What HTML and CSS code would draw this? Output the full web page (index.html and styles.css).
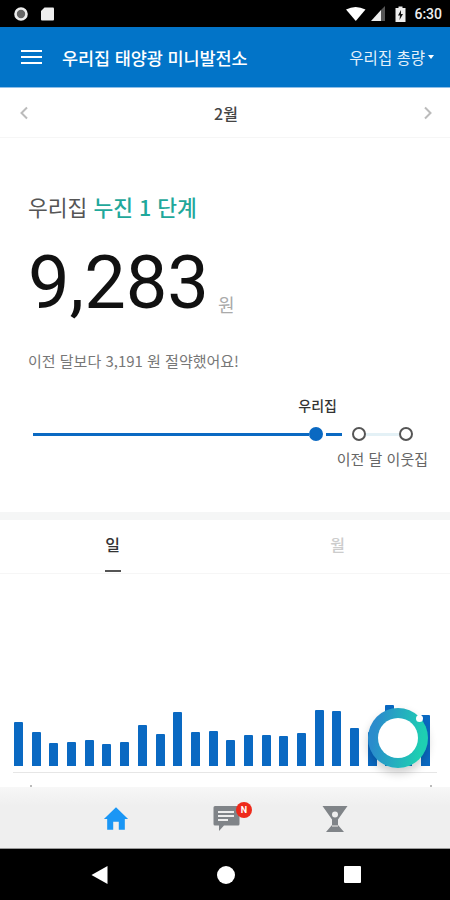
FILE: index.html
```html
<!DOCTYPE html>
<html lang="ko">
<head>
  <meta charset="UTF-8" />
  <meta name="viewport" content="width=device-width, initial-scale=1.0"/>
  <title>우리집 태양광 미니발전소</title>
  <link rel="stylesheet" href="styles.css">
</head>
<body>

  <div class="phone">

    <div class="status-bar">
      <div class="status-left">
        <svg width="16" height="16" viewBox="0 0 16 16"><circle cx="8" cy="8" r="5.5" fill="#666" stroke="#eee" stroke-width="2.6"/></svg>
        <svg width="15" height="16" viewBox="0 0 15 16"><path d="M4.5 1.5H13a1 1 0 0 1 1 1V13.5a1 1 0 0 1-1 1H2a1 1 0 0 1-1-1V5z" fill="#eee"/></svg>
      </div>
      <div class="status-right">
        <svg width="22" height="16" viewBox="0 0 22 16"><path d="M1 3.5Q10.500 -1.500 20.500 3.500L10.800 15z" fill="#fff"/></svg>
        <svg width="16" height="16" viewBox="0 0 16 16"><path d="M1 15L11 4V15z" fill="#eee"/><path d="M11 4L15 0V15H11z" fill="#555"/></svg>
        <svg class="battery" width="11" height="18" viewBox="0 0 11 18"><path d="M3.500 1.500H7.500V3H10.500V17H.5V3H3.500z" fill="#eee"/><path d="M6 5L3 10.500H5L4.500 15L8 9H6z" fill="#111"/></svg>
        <span class="clock">6:30</span>
      </div>
    </div>

    <header class="app-bar">
      <div class="menu-icon"><span></span><span></span><span></span></div>
      <div class="app-title">우리집 태양광 미니발전소</div>
      <div class="app-filter">우리집 총량 <i class="caret"></i></div>
    </header>

    <div class="month-bar">
      <svg width="10" height="14" viewBox="0 0 10 14"><path d="M8 1.500L2.500 7L8 12.500" fill="none" stroke="#bbb" stroke-width="2"/></svg>
      <div class="month-label">2월</div>
      <svg width="10" height="14" viewBox="0 0 10 14"><path d="M2 1.500L7.500 7L2 12.500" fill="none" stroke="#bbb" stroke-width="2"/></svg>
    </div>

    <section class="summary">
      <h2 class="level">우리집 <span class="level-name">누진 1 단계</span></h2>
      <div class="amount"><span class="amount-num">9,283</span><span class="amount-unit">원</span></div>
      <p class="saving">이전 달보다 3,191 원 절약했어요!</p>

      <div class="compare">
        <div class="compare-top">우리집</div>
        <div class="compare-track">
          <span class="line line-long"></span>
          <span class="dot dot-on"></span>
          <span class="line line-short"></span>
          <span class="dot"></span>
          <span class="line line-pale"></span>
          <span class="dot"></span>
        </div>
        <div class="compare-bottom">이전 달 이웃집</div>
      </div>
    </section>

    <nav class="tabs">
      <div class="tab tab-on">일</div>
      <div class="tab">월</div>
    </nav>

    <section class="chart">
      <div class="bars">
        <span style="height:44px"></span>
        <span style="height:34px"></span>
        <span style="height:23px"></span>
        <span style="height:24px"></span>
        <span style="height:26px"></span>
        <span style="height:22px"></span>
        <span style="height:24px"></span>
        <span style="height:41px"></span>
        <span style="height:32px"></span>
        <span style="height:54px"></span>
        <span style="height:34px"></span>
        <span style="height:35px"></span>
        <span style="height:26px"></span>
        <span style="height:31px"></span>
        <span style="height:31px"></span>
        <span style="height:30px"></span>
        <span style="height:33px"></span>
        <span style="height:56px"></span>
        <span style="height:55px"></span>
        <span style="height:38px"></span>
        <span style="height:34px"></span>
        <span style="height:61px"></span>
        <span style="height:40px"></span>
        <span style="height:51px"></span>
      </div>
      <div class="axis"></div>
      <div class="ticks"><i></i><i></i></div>
      <div class="fab"><span class="fab-dot"></span></div>
    </section>

    <nav class="bottom-nav">
      <svg width="26" height="25" viewBox="0 0 28 26"><path d="M14 1L27 13.500H23.500V25H17V16.500H11V25H4.500V13.500H1z" fill="#1a96f5"/></svg>
      <div class="msg-icon">
        <svg width="28" height="27" viewBox="0 0 28 27">
          <path d="M2 1H25a1.500 1.500 0 0 1 1.500 1.500V19a1.500 1.500 0 0 1-1.500 1.500H11L6 26V20.500H2A1.500 1.500 0 0 1 .5 19V2.500A1.500 1.500 0 0 1 2 1z" fill="#808488"/>
          <path d="M5 7H21M5 11H21M5 15H15" stroke="#eee" stroke-width="1.800"/>
        </svg>
        <span class="badge">N</span>
      </div>
      <svg width="26" height="28" viewBox="0 0 26 28">
        <path d="M.5 1H25.500L16 14.500V20L22 27H4L10 20V14.500z" fill="#808488"/>
        <path d="M10 21H16" stroke="#ccc" stroke-width="1.500"/>
        <circle cx="13" cy="9.500" r="3" fill="#eee"/>
      </svg>
    </nav>

    <div class="sys-nav">
      <svg width="17" height="18" viewBox="0 0 17 18"><path d="M16.500 0V18L.5 9z" fill="#fff"/></svg>
      <svg width="18" height="18" viewBox="0 0 18 18"><circle cx="9" cy="9" r="9" fill="#fff"/></svg>
      <svg width="17" height="17" viewBox="0 0 17 17"><rect width="17" height="17" rx="1" fill="#fff"/></svg>
    </div>

  </div>

</body>
</html>
```

FILE: styles.css
```css
body {
  margin: 0;
  font-family: "Noto Sans CJK KR", Roboto, sans-serif;
  background-color: #fff;
}

.phone {
  width: 450px;
  height: 900px;
  display: flex;
  flex-direction: column;
  overflow: hidden;
}

.status-bar {
  height: 27px;
  flex: none;
  background-color: #000;
  display: flex;
  justify-content: space-between;
  align-items: center;
  padding: 0 8px 0 13px;
}

.status-left,
.status-right {
  display: flex;
  align-items: center;
}

.status-left {
  gap: 11px;
}

.status-right {
  gap: 3px;
}

.battery {
  margin: 0 5px 0 6px;
}

.clock {
  font-family: Roboto, sans-serif;
  font-size: 14px;
  font-weight: 500;
  color: #eee;
}

.app-bar {
  height: 61px;
  flex: none;
  box-sizing: border-box;
  background-color: #0274c8;
  border-bottom: 1px solid #8fbfe8;
  display: flex;
  align-items: center;
  padding: 0 16px 0 21px;
  color: #fff;
}

.menu-icon {
  width: 21px;
  display: flex;
  flex-direction: column;
  gap: 4px;
  margin-right: 20px;
}

.menu-icon span {
  height: 2px;
  background-color: #fff;
}

.app-title {
  font-size: 17.500px;
  font-weight: 500;
  letter-spacing: -0.1px;
}

.app-filter {
  margin-left: auto;
  font-size: 15.500px;
  color: #e4f0fa;
  display: flex;
  align-items: center;
  gap: 3px;
}

.caret {
  width: 0;
  height: 0;
  border-left: 3.5px solid transparent;
  border-right: 3.5px solid transparent;
  border-top: 4px solid #fff;
}

.month-bar {
  height: 50px;
  flex: none;
  box-sizing: border-box;
  border-bottom: 1px solid #f6f6f6;
  display: flex;
  justify-content: space-between;
  align-items: center;
  padding: 0 17px 0 19px;
}

.month-label {
  font-size: 16px;
  font-weight: 500;
  color: #444;
}

.summary {
  height: 382px;
  flex: none;
  box-sizing: border-box;
  padding: 52px 0 0 28px;
  border-bottom: 8px solid #f5f6f6;
}

.level {
  margin: 0;
  font-size: 21.500px;
  font-weight: 400;
  line-height: 34px;
  color: #555;
}

.level-name {
  font-weight: 500;
  color: #1fa89b;
}

.amount {
  margin-top: 21px;
  display: flex;
  align-items: flex-end;
  gap: 9px;
  height: 76px;
}

.amount-num {
  font-family: Roboto, sans-serif;
  font-size: 74px;
  line-height: 76px;
  color: #111;
}

.amount-unit {
  font-size: 18px;
  line-height: 34px;
  color: #aaa;
}

.saving {
  margin: 30px 0 0;
  font-size: 15px;
  line-height: 20px;
  color: #777;
}

.compare {
  margin: 24px 22px 0 5px;
}

.compare-top {
  font-size: 14px;
  font-weight: 500;
  line-height: 20px;
  color: #333;
  text-align: right;
  padding-right: 91px;
}

.compare-track {
  display: flex;
  align-items: center;
  height: 20px;
  margin-top: 9px;
}

.line {
  height: 3px;
  background-color: #0a69c2;
}

.line-long {
  width: 276px;
}

.line-short {
  width: 16px;
  margin: 0 10px 0 3px;
}

.line-pale {
  width: 33px;
  background-color: #e4f1f6;
}

.dot {
  width: 14px;
  height: 14px;
  flex: none;
  box-sizing: border-box;
  border: 2px solid #555;
  border-radius: 50%;
  background-color: #fff;
}

.dot-on {
  border-color: #0a69c2;
  background-color: #0a69c2;
}

.compare-bottom {
  margin-top: 5px;
  font-size: 15px;
  line-height: 20px;
  color: #666;
  text-align: right;
}

.tabs {
  height: 54px;
  flex: none;
  box-sizing: border-box;
  border-bottom: 1px solid #f6f6f6;
  display: flex;
}

.tab {
  flex: 1;
  position: relative;
  text-align: center;
  font-size: 16px;
  font-weight: 500;
  line-height: 48px;
  color: #ccc;
}

.tab-on {
  color: #333;
}

/* short underline below the active tab */
.tab-on::after {
  content: "";
  position: absolute;
  left: 50%;
  bottom: 1px;
  width: 16px;
  height: 2px;
  margin-left: -8px;
  background-color: #555;
}

.chart {
  flex: 1;
  position: relative;
  display: flex;
  flex-direction: column;
  justify-content: flex-end;
  padding: 0 13px;
  background-color: #fff;
}

.bars {
  display: flex;
  justify-content: space-between;
  align-items: flex-end;
  padding: 0 7px 0 1px;
}

.bars span {
  width: 9px;
  border-radius: 1px 1px 0 0;
  background-color: #0a69c2;
}

.axis {
  height: 1px;
  margin-top: 6px;
  background-color: #e6e6e6;
}

.ticks {
  display: flex;
  justify-content: space-between;
  height: 2px;
  margin-top: 12px;
  padding: 0 5px 0 17px;
}

.ticks i {
  width: 2px;
  height: 2px;
  background-color: #bbb;
}

.fab {
  position: absolute;
  right: 22px;
  bottom: 19px;
  width: 60px;
  height: 60px;
  box-sizing: border-box;
  border: 10px solid transparent;
  border-radius: 50%;
  background:
    linear-gradient(#fff, #fff) padding-box,
    linear-gradient(100deg, #2a8ccc 15%, #1ecfb2 85%) border-box;
  box-shadow: 0 5px 10px rgba(0,0,0,0.2);
}

.fab-dot {
  position: absolute;
  top: -3px;
  right: -5px;
  width: 7px;
  height: 7px;
  border-radius: 50%;
  background-color: #fff;
}

.bottom-nav {
  height: 62px;
  flex: none;
  box-sizing: border-box;
  background: linear-gradient(#f7f7f7, #efefef 30%);
  border-bottom: 1px solid #999;
  display: flex;
  justify-content: space-between;
  align-items: center;
  padding: 2px 102px 0 103px;
}

.msg-icon {
  position: relative;
  display: flex;
  margin-left: 3px;
}

.badge {
  position: absolute;
  top: -3px;
  right: -11px;
  width: 16px;
  height: 16px;
  border-radius: 50%;
  background-color: #ee2a1b;
  color: #fff;
  font-family: Roboto, sans-serif;
  font-size: 9px;
  font-weight: 700;
  line-height: 16px;
  text-align: center;
}

.sys-nav {
  height: 51px;
  flex: none;
  background-color: #000;
  display: flex;
  justify-content: space-between;
  align-items: center;
  padding: 0 89px 0 91px;
}
```
